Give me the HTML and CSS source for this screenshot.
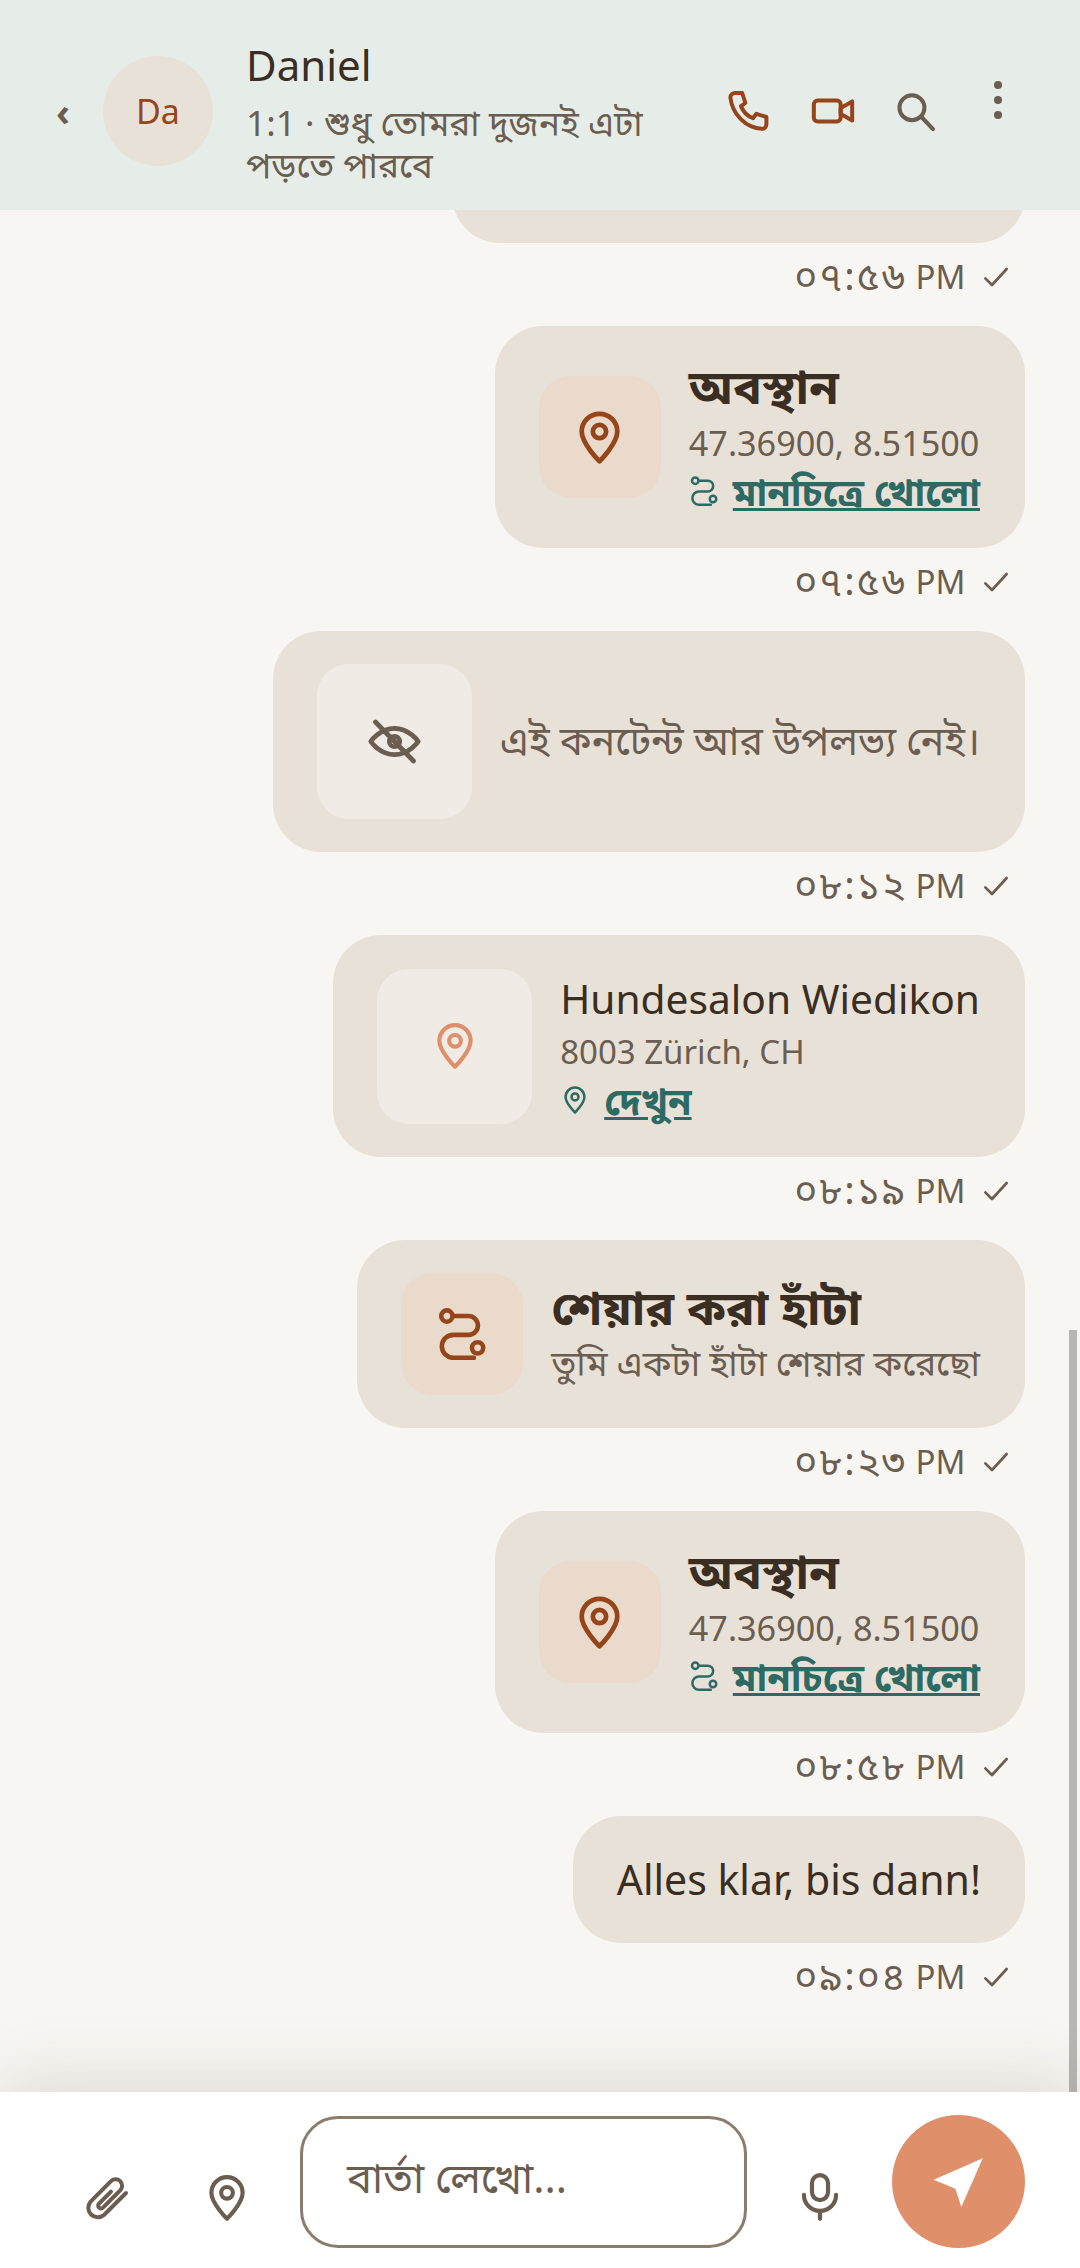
FILE: index.html
```html
<!DOCTYPE html>
<html>
	<head>
		<meta charset="UTF-8">
		<title>Daniel</title>
		<link rel="stylesheet" href="styles.css">
	</head>
	<body>
		<div id="app">
			<!-- header -->
			<div class="head">
				<span class="back">‹</span>
				<div class="avatar">Da</div>
				<div class="who">
					<div class="name">Daniel</div>
					<div class="sub">1:1 · শুধু তোমরা দুজনই এটা পড়তে পারবে</div>
				</div>
				<svg class="ic-call" viewBox="0 0 24 24"><path d="M5 3h3.600l1.600 5-2.200 1.600c1 2.600 3.200 4.900 6 6l1.700-2.200 5 1.600v3.600c0 1.300-1 2.400-2.300 2.300C10.400 20.400 3.600 13.600 2.700 5.300 2.600 4 3.700 3 5 3z"/></svg>
				<svg class="ic-video" viewBox="0 0 24 24"><rect x="2" y="6.500" width="14" height="11" rx="2"/><path d="M16 10.500l6-3.500v10l-6-3.500z"/></svg>
				<svg class="ic-search" viewBox="0 0 24 24"><circle cx="8.700" cy="10.200" r="6.800"/><path d="M14 15.400l6.200 6.500"/></svg>
				<div class="dots"><i></i><i></i><i></i></div>
			</div>

			<!-- messages -->
			<div class="chat">
				<div class="list">
					<div class="bubble cut"></div>
					<div class="time"><span class="bn">০৭:৫৬</span> PM <svg viewBox="0 0 24 24"><path d="M4 13l5 5L20 6"/></svg></div>

					<div class="bubble card">
						<div class="thumb small warm">
							<svg class="pin" viewBox="0 0 24 24"><path d="M12 22S4.500 14.600 4.500 9.500a7.500 7.500 0 0 1 15 0C19.500 14.600 12 22 12 22z"/><circle cx="12" cy="9.500" r="2.800"/></svg>
						</div>
						<div class="info">
							<div class="title bold">অবস্থান</div>
							<div class="desc coords">47.36900, 8.51500</div>
							<div class="link">
								<svg viewBox="0 0 24 24"><circle cx="5" cy="3.700" r="2.600"/><circle cx="19.200" cy="18.400" r="2.600"/><path d="M7.800 3.700H15a4.350 4.350 0 0 1 0 8.700H8a5.300 5.300 0 0 0 0 10.600h9.500"/></svg>
								<u>মানচিত্রে খোলো</u>
							</div>
						</div>
					</div>
					<div class="time"><span class="bn">০৭:৫৬</span> PM <svg viewBox="0 0 24 24"><path d="M4 13l5 5L20 6"/></svg></div>

					<div class="bubble card">
						<div class="thumb big">
							<svg class="eye" viewBox="0 0 24 24"><path d="M2 12s3.800-5.500 10-5.500S22 12 22 12s-3.800 5.500-10 5.500S2 12 2 12z"/><circle cx="12" cy="12" r="2.200"/><path d="M4 3.800l16 16.400"/></svg>
						</div>
						<div class="gone">এই কনটেন্ট আর উপলভ্য নেই।</div>
					</div>
					<div class="time"><span class="bn">০৮:১২</span> PM <svg viewBox="0 0 24 24"><path d="M4 13l5 5L20 6"/></svg></div>

					<div class="bubble card">
						<div class="thumb big">
							<svg class="pin light" viewBox="0 0 24 24"><path d="M12 22S4.500 14.600 4.500 9.500a7.500 7.500 0 0 1 15 0C19.500 14.600 12 22 12 22z"/><circle cx="12" cy="9.500" r="2.800"/></svg>
						</div>
						<div class="info">
							<div class="title">Hundesalon Wiedikon</div>
							<div class="desc">8003 Zürich, CH</div>
							<div class="link">
								<svg viewBox="0 0 24 24"><path d="M12 22S4.500 14.600 4.500 9.500a7.500 7.500 0 0 1 15 0C19.500 14.600 12 22 12 22z"/><circle cx="12" cy="9.500" r="2.800"/></svg>
								<u>দেখুন</u>
							</div>
						</div>
					</div>
					<div class="time"><span class="bn">০৮:১৯</span> PM <svg viewBox="0 0 24 24"><path d="M4 13l5 5L20 6"/></svg></div>

					<div class="bubble card">
						<div class="thumb small warm">
							<svg class="route" viewBox="0 0 24 24"><circle cx="5" cy="3.700" r="2.600"/><circle cx="19.200" cy="18.400" r="2.600"/><path d="M7.800 3.700H15a4.350 4.350 0 0 1 0 8.700H8a5.300 5.300 0 0 0 0 10.600h9.500"/></svg>
						</div>
						<div class="info tight">
							<div class="title bold">শেয়ার করা হাঁটা</div>
							<div class="walk">তুমি একটা হাঁটা শেয়ার করেছো</div>
						</div>
					</div>
					<div class="time"><span class="bn">০৮:২৩</span> PM <svg viewBox="0 0 24 24"><path d="M4 13l5 5L20 6"/></svg></div>

					<div class="bubble card">
						<div class="thumb small warm">
							<svg class="pin" viewBox="0 0 24 24"><path d="M12 22S4.500 14.600 4.500 9.500a7.500 7.500 0 0 1 15 0C19.500 14.600 12 22 12 22z"/><circle cx="12" cy="9.500" r="2.800"/></svg>
						</div>
						<div class="info">
							<div class="title bold">অবস্থান</div>
							<div class="desc coords">47.36900, 8.51500</div>
							<div class="link">
								<svg viewBox="0 0 24 24"><circle cx="5" cy="3.700" r="2.600"/><circle cx="19.200" cy="18.400" r="2.600"/><path d="M7.800 3.700H15a4.350 4.350 0 0 1 0 8.700H8a5.300 5.300 0 0 0 0 10.600h9.500"/></svg>
								<u>মানচিত্রে খোলো</u>
							</div>
						</div>
					</div>
					<div class="time"><span class="bn">০৮:৫৮</span> PM <svg viewBox="0 0 24 24"><path d="M4 13l5 5L20 6"/></svg></div>

					<div class="bubble plain">Alles klar, bis dann!</div>
					<div class="time"><span class="bn">০৯:০৪</span> PM <svg viewBox="0 0 24 24"><path d="M4 13l5 5L20 6"/></svg></div>
				</div>
				<div class="scrollbar"></div>
			</div>

			<!-- composer -->
			<div class="bar">
				<svg class="clip" viewBox="0 0 48 48"><path d="M42 19L20 41a9.500 9.500 0 0 1-13.400-13.400L27 7.200a6.500 6.500 0 0 1 9.200 9.200L19 33.600a2.800 2.800 0 0 1-4-4l12-12"/></svg>
				<svg class="bar-pin" viewBox="0 0 24 24"><path d="M12 22S4.500 14.600 4.500 9.500a7.500 7.500 0 0 1 15 0C19.500 14.600 12 22 12 22z"/><circle cx="12" cy="9.500" r="2.800"/></svg>
				<div class="input">বার্তা লেখো...</div>
				<svg class="mic" viewBox="0 0 24 24"><rect x="8.150" y="1" width="7.700" height="12" rx="3.850"/><path d="M4.300 10.500a7.700 7.700 0 0 0 15.400 0M12 18.200V22"/></svg>
				<div class="send"><svg viewBox="0 0 24 24"><path d="M21.200 2.800L2.200 11.100l8.400 3.500 2.300 7.100z"/></svg></div>
			</div>
		</div>
	</body>
</html>
```
FILE: styles.css
```css
*{
	margin: 0;
	padding: 0;
	box-sizing: border-box;
}
body{
	font-family: "Noto Sans", "Noto Sans Bengali", sans-serif;
	background: #f8f6f2;
	color: #3a2e22;
}
svg{
	flex: none;
	fill: none;
	stroke-linecap: round;
	stroke-linejoin: round;
}
#app{
	width: 1080px;
	height: 2268px;
	display: flex;
	flex-direction: column;
	overflow: hidden;
}

/* header */
.head{
	height: 210px;
	flex: none;
	background: #e6ede8;
	display: flex;
	align-items: center;
	padding: 12px 0 0 56px;
}
.back{
	width: 47px;
	font-size: 38px;
	line-height: 44px;
	color: #6b5d4f;
	font-weight: 700;
}
.avatar{
	width: 110px;
	height: 110px;
	border-radius: 50%;
	background: #e8e1d8;
	color: #96451b;
	font-size: 34px;
	display: flex;
	align-items: center;
	justify-content: center;
}
.who{
	width: 420px;
	margin-left: 33px;
}
.name{
	font-size: 42px;
	line-height: 56px;
	margin-bottom: 8px;
}
.sub{
	font-size: 35.300px;
	line-height: 42px;
	color: #6b5d4f;
}
.ic-call{
	width: 48px;
	height: 48px;
	margin-left: 59px;
	stroke: #96451b;
	stroke-width: 2;
}
.ic-video{
	width: 46px;
	height: 46px;
	margin-left: 37px;
	stroke: #96451b;
	stroke-width: 2.100;
}
.ic-search{
	width: 44px;
	height: 44px;
	margin-left: 40px;
	stroke: #6b5d4f;
	stroke-width: 2.200;
}
.dots{
	display: flex;
	flex-direction: column;
	gap: 7px;
	margin: 0 0 23px 54px;
}
.dots i{
	width: 8px;
	height: 8px;
	border-radius: 50%;
	background: #6b5d4f;
}

/* messages */
.chat{
	flex: 1;
	position: relative;
	overflow: hidden;
	display: flex;
	flex-direction: column;
	justify-content: flex-end;
}
.list{
	display: flex;
	flex-direction: column;
	align-items: flex-end;
	padding: 0 55px 66px 0;
}
.bubble{
	background: #e8e1d8;
	border-radius: 48px;
}
.cut{
	width: 573px;
	height: 140px;
}
.card{
	display: flex;
	align-items: center;
	padding: 33px 45px 33px 44px;
	gap: 28px;
}
.thumb{
	flex: none;
	display: flex;
	align-items: center;
	justify-content: center;
}
.small{
	width: 122px;
	height: 122px;
	border-radius: 32px;
}
.big{
	width: 155px;
	height: 155px;
	border-radius: 32px;
	background: #f0ece5;
}
.warm{
	background: #e9dacb;
}
.pin{
	width: 57px;
	height: 57px;
	stroke: #96451b;
	stroke-width: 2;
}
.pin.light{
	width: 50px;
	height: 50px;
	stroke: #e08f6b;
}
.route{
	width: 52px;
	height: 52px;
	stroke: #96451b;
	stroke-width: 2.100;
}
.eye{
	width: 57px;
	height: 57px;
	stroke: #6b5d4f;
	stroke-width: 2;
}
.title{
	font-size: 40.700px;
	line-height: 60px;
}
.bold{
	font-size: 48px;
	font-weight: 700;
	line-height: 54px;
	padding-bottom: 6px;
}
.desc{
	font-size: 33px;
	line-height: 48px;
	color: #6b5d4f;
}
.coords{
	font-size: 34.200px;
}
.link{
	display: flex;
	align-items: center;
	gap: 14px;
	font-size: 38px;
	line-height: 48px;
	font-weight: 700;
	color: #2d6a64;
}
.link svg{
	width: 30px;
	height: 30px;
	stroke: #2d6a64;
	stroke-width: 2;
}
.gone{
	font-size: 39.300px;
	color: #6b5d4f;
}
.tight{
	padding-bottom: 6px;
}
.tight .title{
	line-height: 62px;
	padding-bottom: 0;
}
.walk{
	font-size: 35.500px;
	line-height: 48px;
	color: #6b5d4f;
}
.plain{
	padding: 0 44px;
	height: 127px;
	line-height: 127px;
	font-size: 41px;
}
.time{
	display: flex;
	align-items: center;
	white-space: pre;
	height: 83px;
	padding: 0 13px 16px 0;
	font-size: 33px;
	color: #6b5d4f;
}
.bn{
	font-size: 39px;
	letter-spacing: 2px;
}
.time svg{
	width: 32px;
	height: 32px;
	margin-left: 6px;
	stroke: #6b5d4f;
	stroke-width: 2;
}
.scrollbar{
	position: absolute;
	right: 3px;
	bottom: 0;
	width: 8px;
	height: 762px;
	background: #b8b6b2;
}

/* composer */
.bar{
	position: relative;
	height: 176px;
	flex: none;
	background: #fff;
	display: flex;
	align-items: center;
	padding: 23px 55px 20px 84px;
	box-shadow: 0 -6px 70px rgba(70,60,50,0.16);
}
.clip{
	width: 48px;
	height: 48px;
	stroke: #6b5d4f;
	stroke-width: 4;
	margin-top: 33px;
}
.bar-pin{
	width: 50px;
	height: 50px;
	stroke: #6b5d4f;
	stroke-width: 2;
	margin: 33px 0 0 70px;
}
.input{
	width: 447px;
	height: 132px;
	margin-left: 48px;
	padding: 0 44px;
	border: 3px solid #8a7d6b;
	border-radius: 38px;
	font-size: 42px;
	line-height: 116px;
	color: #6b5d4f;
}
.mic{
	width: 50px;
	height: 50px;
	stroke: #6b5d4f;
	stroke-width: 2;
	margin: 33px 0 0 48px;
}
.send{
	width: 133px;
	height: 133px;
	margin-left: 47px;
	border-radius: 50%;
	background: #e08f6b;
	display: flex;
	align-items: center;
	justify-content: center;
}
.send svg{
	width: 62px;
	height: 62px;
	fill: #fff;
}
```
